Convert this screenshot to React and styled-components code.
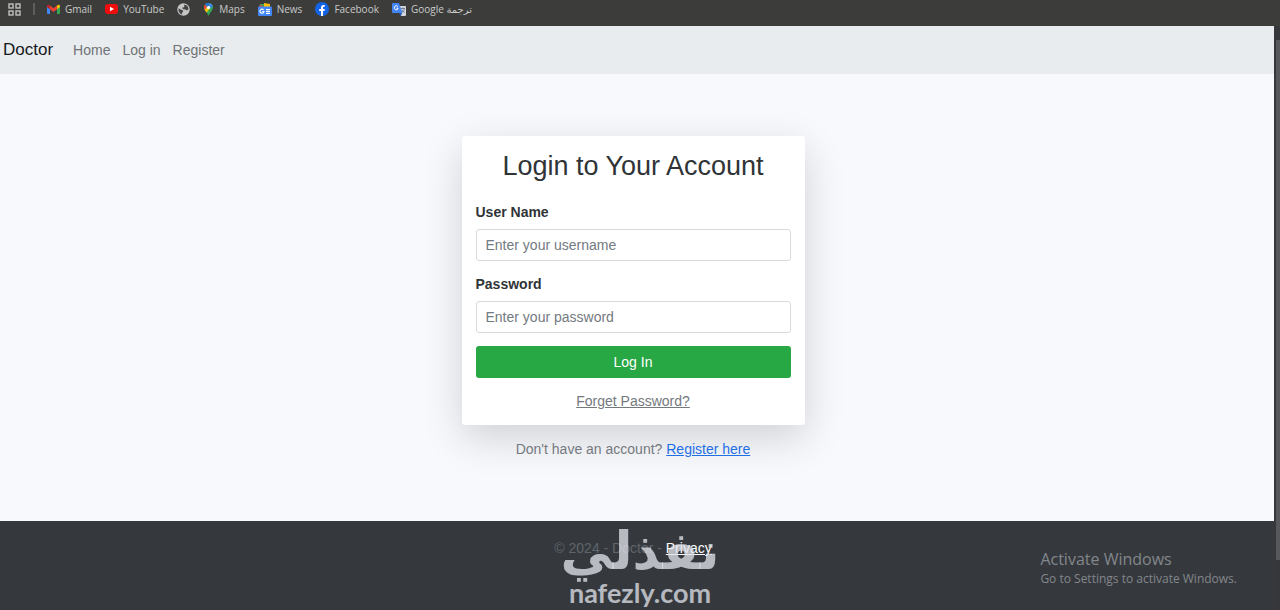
import React from "react";
import styled, { createGlobalStyle } from "styled-components";

const GlobalStyle = createGlobalStyle`
  *, *::before, *::after { box-sizing: border-box; }
  body {
    margin: 0;
    font-family: "Liberation Sans", Arial, sans-serif;
    font-size: 14px;
    line-height: 20px;
    color: #212529;
    background: #f8f9fd;
  }
`;

const Shell = styled.div`
  display: flex;
  flex-direction: column;
  min-height: 100vh;
`;

const BookmarksBar = styled.nav`
  display: flex;
  align-items: center;
  height: 26px;
  padding: 0 8px 8px;
  background: #3c3d3b;
  font-family: "Open Sans", "DejaVu Sans", sans-serif;
  font-size: 10px;
  line-height: 14px;
`;

const Divider = styled.span`
  width: 2px;
  height: 12px;
  margin: 0 12px;
  background: #5c5d5c;
`;

const Bookmark = styled.a`
  display: flex;
  align-items: center;
  gap: 5px;
  margin-right: 13px;
  color: #c9cac9;
  text-decoration: none;
  white-space: nowrap;

  svg { flex: none; }
`;

const Viewport = styled.div`
  display: flex;
  flex: 1;
`;

const Page = styled.div`
  display: flex;
  flex-direction: column;
  flex: 1;
  min-width: 0;
`;

const ScrollTrack = styled.div`
  display: flex;
  flex-direction: column;
  width: 6px;
  padding: 14px 0 50px 2px;
  background: #36373a;
`;

const ScrollThumb = styled.div`
  flex: 1;
  background: #56585b;
`;

const Navbar = styled.nav`
  display: flex;
  align-items: center;
  gap: 12px;
  height: 48px;
  padding: 0 3px;
  background: #e9ecef;
`;

const Brand = styled.a`
  margin-right: 8px;
  font-size: 17px;
  color: #16181b;
  text-decoration: none;
`;

const NavLink = styled.a`
  color: #6f7376;
  text-decoration: none;
`;

const Main = styled.main`
  display: flex;
  flex: 1;
  flex-direction: column;
  align-items: center;
  padding: 62px 8px 61px 0;
`;

const Card = styled.form`
  width: 100%;
  max-width: 343px;
  padding: 13px 14px 14px;
  border-radius: 3px;
  background: #fff;
  box-shadow: 0 13px 40px rgba(0, 0, 0, 0.16);
`;

const Title = styled.h1`
  margin: 0 0 19px;
  font-size: 27px;
  line-height: 34px;
  font-weight: 400;
  text-align: center;
  color: #303437;
`;

const Field = styled.div`
  margin-bottom: 13px;
`;

const Label = styled.label`
  display: block;
  margin-bottom: 7px;
  font-weight: 700;
  color: #303437;
`;

const Input = styled.input`
  display: block;
  width: 100%;
  height: 32px;
  padding: 0 9px;
  border: 1px solid #d6dbe0;
  border-radius: 3px;
  background: #fff;
  font: inherit;
  color: #495057;

  &::placeholder { color: #737a81; opacity: 1; }
`;

const SubmitButton = styled.button`
  display: block;
  width: 100%;
  height: 32px;
  margin-bottom: 13px;
  border: 0;
  border-radius: 3px;
  background: #28a745;
  font: inherit;
  color: #fff;
`;

const Centered = styled.p`
  margin: 0;
  text-align: center;
  color: #74797e;
`;

const SignupLine = styled(Centered)`
  margin-top: 14px;
`;

const TextLink = styled.a`
  color: ${({ $tone }) => $tone};
  text-decoration: underline;
`;

const Footer = styled.footer`
  position: relative;
  height: 89px;
  padding: 17px 8px 0 0;
  background: #35393e;
  text-align: center;
  color: #5f656b;
`;

const Watermark = styled.div`
  position: absolute;
  inset: 2px 0 0 6px;
  display: flex;
  flex-direction: column;
  align-items: center;
  color: rgba(226, 228, 234, 0.76);
  font-weight: 700;
  pointer-events: none;
`;

const WatermarkArabic = styled.span`
  font-family: "DejaVu Sans", sans-serif;
  font-size: 52px;
  line-height: 56px;
`;

const WatermarkLatin = styled.span`
  font-family: "Lato", sans-serif;
  font-size: 27px;
  line-height: 28px;
`;

const ActivationNotice = styled.div`
  position: absolute;
  right: 37px;
  top: 27px;
  font-family: "Open Sans", sans-serif;
  font-size: 12px;
  line-height: 18px;
  text-align: left;
  color: #83868a;
`;

const NoticeTitle = styled.div`
  font-size: 16px;
  line-height: 22px;
`;

const AppsIcon = () => (
  <svg width="13" height="13" viewBox="0 0 13 13" fill="none" stroke="#bfc0bf" strokeWidth="1.4" aria-hidden="true">
    <rect x="1" y="1" width="4" height="4" />
    <rect x="8" y="1" width="4" height="4" />
    <rect x="1" y="8" width="4" height="4" />
    <rect x="8" y="8" width="4" height="4" />
  </svg>
);

const GmailIcon = () => (
  <svg width="13" height="11" viewBox="0 0 13 11" aria-hidden="true">
    <path d="M0 2v7q0 1 1 1h2V4z" fill="#4285f4" />
    <path d="M13 2v7q0 1-1 1h-2V4z" fill="#34a853" />
    <path d="M3 1.5 6.5 4.2 10 1.5v3.7L6.5 8 3 5.2z" fill="#ea4335" />
    <path d="M0 2Q.5-.3 3 1.5v3.7L0 3z" fill="#c5221f" />
    <path d="M13 2q-.5-2.3-3-.5v3.7L13 3z" fill="#fbbc04" />
  </svg>
);

const YouTubeIcon = () => (
  <svg width="13" height="10" viewBox="0 0 13 10" aria-hidden="true">
    <rect width="13" height="10" rx="3" fill="#f00d0d" />
    <path d="m5 2.8 4 2.2-4 2.2z" fill="#fff" />
  </svg>
);

const GlobeIcon = () => (
  <svg width="13" height="13" viewBox="0 0 13 13" aria-hidden="true">
    <circle cx="6.5" cy="6.5" r="6.2" fill="#c5c6c5" />
    <path d="M1.5 5.2 4 6.8l1.5.2.8 1.8-1.2.8v1.8Q1.2 10.3 1.5 5.2M7 1.5q4.5.5 4.5 4.8L10 7.5 8.4 6.4l-2.2-.2L5 4.8l2-.6.4-1.4z" fill="#444544" />
  </svg>
);

const MapsIcon = () => (
  <svg width="11" height="13" viewBox="0 0 11 13" aria-hidden="true">
    <path d="M5.5 0Q10 .2 10 4.6 9.8 7 7.4 9.4 6.2 11 5.5 13 4.8 11 3.6 9.4 1 7 1 4.6 1.2.2 5.5 0" fill="#34a853" />
    <path d="M2 1.5Q3.5-.2 6.8.2L3.3 4.8z" fill="#1a73e8" />
    <path d="M2 1.5 4 3.5 1.7 7Q.2 3.8 2 1.5" fill="#ea4335" />
    <path d="M1.6 6.8 4 4l3 1.5-3.5 3.9z" fill="#fbbc04" />
    <path d="M6.8.2Q9.2 1 9.8 3.1L7 5.8 5.4 3z" fill="#4285f4" />
    <circle cx="5.5" cy="4.5" r="1.6" fill="#fff" />
  </svg>
);

const NewsIcon = () => (
  <svg width="14" height="13" viewBox="0 0 14 13" aria-hidden="true">
    <path d="M2 1h7v4H2z" fill="#34a853" />
    <path d="m6 0 6 1v4H6z" fill="#fbbc04" />
    <path d="M1 2.500h4V6H1z" fill="#ea4335" />
    <rect y="3.5" width="14" height="9.5" rx="1" fill="#4285f4" />
    <path d="M5.600 7a2 2 0 1 0 .4 1.500H4.300M8 6.700h4M8 8.500h4M8 10.300h4" fill="none" stroke="#fff" strokeWidth="1.2" />
  </svg>
);

const FacebookIcon = () => (
  <svg width="14" height="14" viewBox="0 0 14 14" aria-hidden="true">
    <circle cx="7" cy="7" r="7" fill="#1464e8" />
    <path d="M6 14V9H4.2V7H6V5.6Q6 3 8.6 3h1.2v1.8H8.9Q8 4.8 8 5.7V7h1.8l-.3 2H8v5z" fill="#fff" />
  </svg>
);

const TranslateIcon = () => (
  <svg width="14" height="13" viewBox="0 0 14 13" aria-hidden="true">
    <path d="M6 3h7q1 0 1 1v8q0 1-1 1H9z" fill="#d4d7dc" />
    <path d="M1 0h6l3.5 10H1Q0 10 0 9V1Q0 0 1 0" fill="#4285f4" />
    <path d="m7 10 3 0-1 3z" fill="#2457bd" />
    <path d="M5.8 3.500a2 2 0 1 0 .4 1.700H4.500" fill="none" stroke="#fff" />
    <path d="M9 5.500h4M11 4.500v1m1.500 0q-.5 2.500-2.500 4m0-2.500q1 2 2.700 2.500" fill="none" stroke="#66758c" strokeWidth=".9" />
  </svg>
);

const bookmarks = [
  { label: "Gmail", Icon: GmailIcon },
  { label: "YouTube", Icon: YouTubeIcon },
  { label: "", Icon: GlobeIcon },
  { label: "Maps", Icon: MapsIcon },
  { label: "News", Icon: NewsIcon },
  { label: "Facebook", Icon: FacebookIcon },
  { label: "Google ترجمة", Icon: TranslateIcon },
];

export default function App() {
  return (
    <Shell>
      <GlobalStyle />
      <BookmarksBar aria-label="Bookmarks">
        <AppsIcon />
        <Divider />
        {bookmarks.map(({ label, Icon }, index) => (
          <Bookmark href="#" key={index}>
            <Icon />
            {label && <span>{label}</span>}
          </Bookmark>
        ))}
      </BookmarksBar>
      <Viewport>
        <Page>
          <Navbar>
            <Brand href="#">Doctor</Brand>
            <NavLink href="#">Home</NavLink>
            <NavLink href="#">Log in</NavLink>
            <NavLink href="#">Register</NavLink>
          </Navbar>
          <Main>
            <Card onSubmit={(event) => event.preventDefault()}>
              <Title>Login to Your Account</Title>
              <Field>
                <Label htmlFor="username">User Name</Label>
                <Input id="username" type="text" placeholder="Enter your username" />
              </Field>
              <Field>
                <Label htmlFor="password">Password</Label>
                <Input id="password" type="password" placeholder="Enter your password" />
              </Field>
              <SubmitButton type="submit">Log In</SubmitButton>
              <Centered>
                <TextLink href="#" $tone="#74797e">Forget Password?</TextLink>
              </Centered>
            </Card>
            <SignupLine>
              Don't have an account? <TextLink href="#" $tone="#1f6fe5">Register here</TextLink>
            </SignupLine>
          </Main>
          <Footer>
            © 2024 - Doctor - <TextLink href="#" $tone="#fff">Privacy</TextLink>
            <Watermark>
              <WatermarkArabic lang="ar" dir="rtl">نفذلي</WatermarkArabic>
              <WatermarkLatin>nafezly.com</WatermarkLatin>
            </Watermark>
            <ActivationNotice>
              <NoticeTitle>Activate Windows</NoticeTitle>
              Go to Settings to activate Windows.
            </ActivationNotice>
          </Footer>
        </Page>
        <ScrollTrack aria-hidden="true">
          <ScrollThumb />
        </ScrollTrack>
      </Viewport>
    </Shell>
  );
}
